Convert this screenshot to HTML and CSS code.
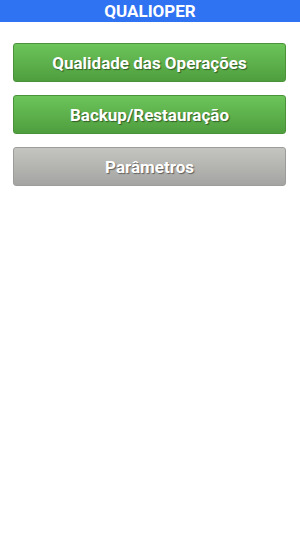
FILE: index.html
```html
<!DOCTYPE html>
<html lang="pt">
<head>
    <meta charset="UTF-8">
    <meta name="viewport" content="width=device-width, initial-scale=1.0">
    <title>QUALIOPER</title>
    <link rel="stylesheet" href="styles.css">
</head>
<body>
    <header class="title-bar">QUALIOPER</header>

    <nav class="menu">
        <button class="menu-btn green">Qualidade das Operações</button>
        <button class="menu-btn green">Backup/Restauração</button>
        <button class="menu-btn grey">Parâmetros</button>
    </nav>
</body>
</html>
```

FILE: styles.css
```css
* {
    margin: 0;
    padding: 0;
    box-sizing: border-box;
}

body {
    font-family: Roboto, 'Liberation Sans', sans-serif;
    background: #ffffff;
    min-height: 100vh;
}

.title-bar {
    height: 22px;
    background: #2f72f2;
    color: #ffffff;
    font-size: 17px;
    font-weight: 700;
    line-height: 22px;
    text-align: center;
}

.menu {
    display: flex;
    flex-direction: column;
    gap: 13px;
    padding: 21px 14px 0 13px;
}

.menu-btn {
    height: 39px;
    width: 100%;
    border-radius: 3px;
    font-family: inherit;
    font-size: 17px;
    font-weight: 700;
    color: #ffffff;
    text-shadow: 1px 1px 1px rgba(0, 0, 0, 0.45);
    cursor: pointer;
}

.menu-btn.green {
    background: linear-gradient(to bottom, #6cc45a, #4f9e3e);
    border: 1px solid #4a9339;
}

.menu-btn.grey {
    background: linear-gradient(to bottom, #c4c4c0, #a4a4a2);
    border: 1px solid #9c9c9a;
}
```
